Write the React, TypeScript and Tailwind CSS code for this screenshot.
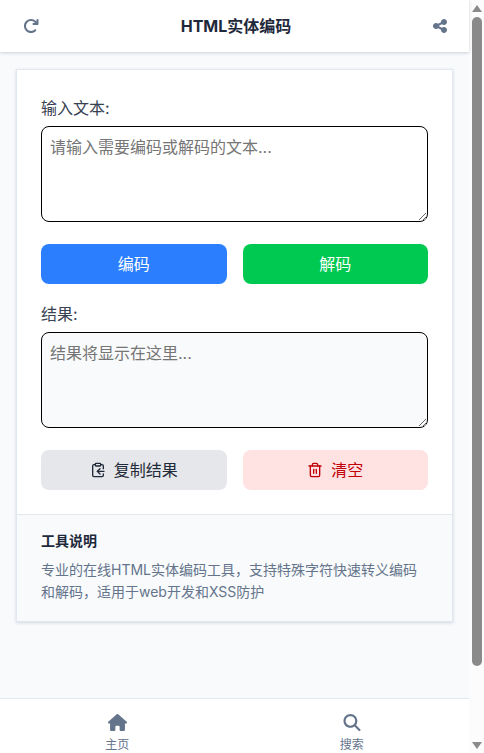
import { FaHouse, FaMagnifyingGlass, FaShareNodes, FaArrowRotateRight } from "react-icons/fa6";
import { ClipboardCopy, Trash2 } from "lucide-react";

export default function App() {
  return (
    <div className="flex h-[753px] overflow-hidden bg-[#f8fafc] text-[#1e293b] font-['Inter','Noto_Sans_CJK_SC',sans-serif]">
      <div className="flex min-w-0 flex-1 flex-col">
        <header className="z-10 flex h-[52px] shrink-0 items-center justify-between bg-white pr-[22px] pl-[23px] shadow-[0_1px_3px_rgba(100,116,139,0.3)]">
          <FaArrowRotateRight className="h-4 w-4 text-[#64748b]" />
          <h1 className="text-base font-bold text-[#1e293b]">HTML实体编码</h1>
          <FaShareNodes className="h-4 w-[14px] text-[#64748b]" />
        </header>
        <main className="flex-1 px-4 pt-[17px]">
          <div className="border border-[#e2e8f0] bg-white shadow-[0_1px_3px_rgba(100,116,139,0.25)]">
            <div className="px-6 pt-[26px] pb-6">
              <label className="mb-1.5 block text-base leading-6 text-[#374151]">输入文本:</label>
              <textarea readOnly rows={4} placeholder="请输入需要编码或解码的文本..." className="block h-24 w-full rounded-lg border border-black bg-white px-2 py-2 text-base leading-6 placeholder:text-[#757575]" />
              <div className="mt-[22px] grid grid-cols-2 gap-4">
                <button className="h-10 rounded-lg bg-[#2b7fff] text-base text-white">编码</button>
                <button className="h-10 rounded-lg bg-[#00c951] text-base text-white">解码</button>
              </div>
              <label className="mt-[18px] mb-1.5 block text-base leading-6 text-[#374151]">结果:</label>
              <textarea readOnly rows={4} placeholder="结果将显示在这里..." className="block h-24 w-full rounded-lg border border-black bg-[#f9fafb] px-2 py-2 text-base leading-6 placeholder:text-[#757575]" />
              <div className="mt-[22px] grid grid-cols-2 gap-4">
                <button className="flex h-10 items-center justify-center gap-2 rounded-lg bg-[#e5e7eb] text-base text-[#1f2937]"><ClipboardCopy className="h-4 w-4" /> 复制结果</button>
                <button className="flex h-10 items-center justify-center gap-2 rounded-lg bg-[#ffe2e2] text-base text-[#c10007]"><Trash2 className="h-4 w-4" /> 清空</button>
              </div>
            </div>
            <div className="border-t border-[#e2e8f0] bg-[#f8fafc] px-6 pt-4 pb-[18px]">
              <h3 className="text-sm font-bold leading-5 text-[#1e293b]">工具说明</h3>
              <p className="mt-2 text-sm leading-[22px] text-[#64748b]">专业的在线HTML实体编码工具，支持特殊字符快速转义编码和解码，适用于web开发和XSS防护</p>
            </div>
          </div>
        </main>
        <nav className="flex h-[55px] shrink-0 border-t border-[#e2e8f0] bg-white">
          <div className="flex flex-1 flex-col items-center pt-[15px]"><FaHouse className="h-[18px] w-[21px] text-[#64748b]" /><span className="mt-1.5 text-xs leading-4 text-[#64748b]">主页</span></div>
          <div className="flex flex-1 flex-col items-center pt-[15px]"><FaMagnifyingGlass className="h-[18px] w-[18px] text-[#64748b]" /><span className="mt-1.5 text-xs leading-4 text-[#64748b]">搜索</span></div>
        </nav>
      </div>
      <aside className="flex w-[15px] shrink-0 flex-col items-center bg-[#fcfcfc] pl-[3px] pr-[2px]">
        <svg viewBox="0 0 10 7" className="mt-[5px] h-[7px] w-[10px] fill-[#8a8a8a]"><path d="M5 0 10 7H0z" /></svg>
        <div className="mt-[5px] h-[649px] w-[10px] rounded-[5px] bg-[#8a8a8a]" />
        <svg viewBox="0 0 10 7" className="mt-[76px] h-[7px] w-[10px] fill-[#8a8a8a]"><path d="M0 0H10L5 7z" /></svg>
      </aside>
    </div>
  );
}
